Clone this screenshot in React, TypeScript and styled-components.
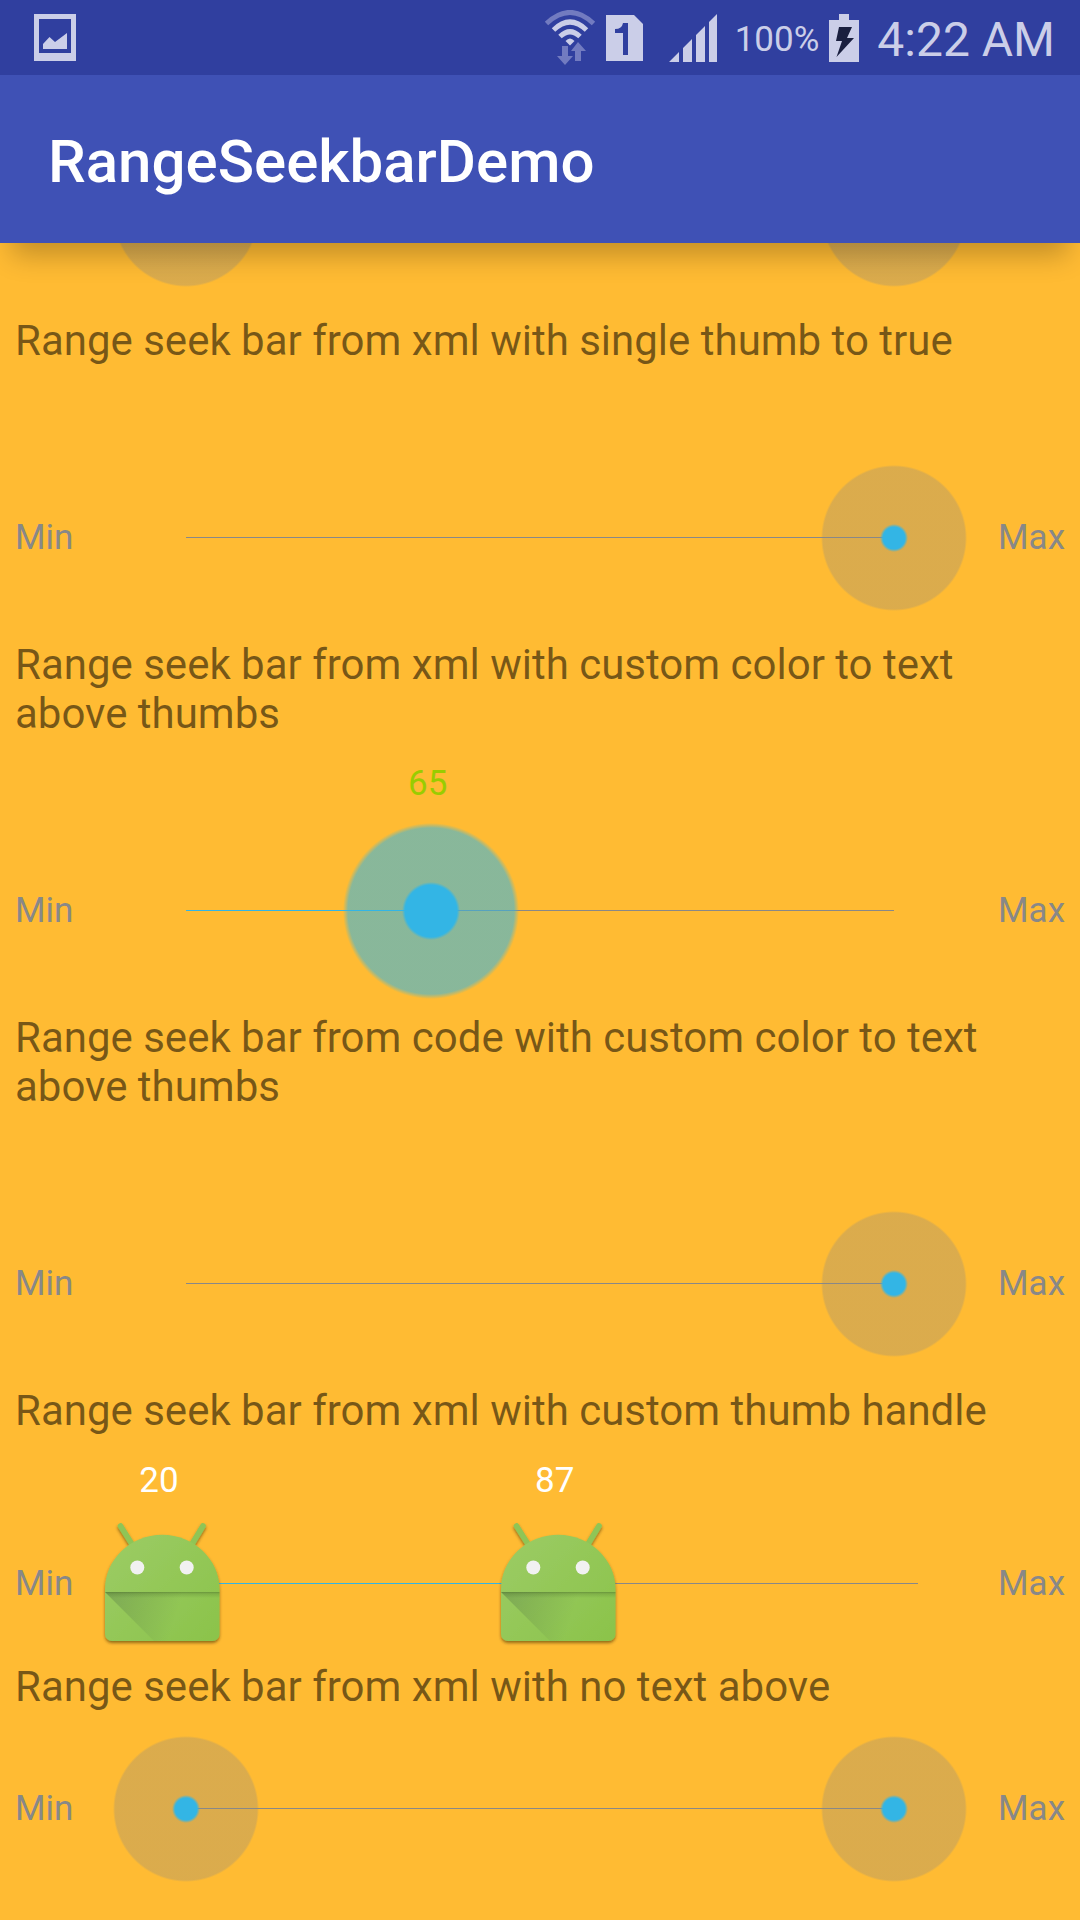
import React, { useId, useState } from "react";
import styled, { createGlobalStyle } from "styled-components";

const GlobalStyle = createGlobalStyle`
  *, *::before, *::after { box-sizing: border-box; }
  html { background: #ffbb33; }
  body {
    margin: 0;
    font-family: Roboto, "Noto Sans", sans-serif;
    background: #ffbb33;
  }
`;

const Screen = styled.div`
  display: flex;
  flex-direction: column;
  min-height: 100vh;
  overflow: hidden;
`;

const Top = styled.header`
  position: sticky;
  top: 0;
  z-index: 10;
  box-shadow: 0 24px 26px -12px rgba(0, 0, 0, 0.24);
`;

const StatusBar = styled.div`
  display: flex;
  align-items: center;
  justify-content: space-between;
  height: 75px;
  padding: 0 25px 0 34px;
  background: #303f9f;
  color: #cbcee8;
`;

const StatusGroup = styled.div`
  display: flex;
  align-items: center;
`;

const StatusIcon = styled.svg<{ $gap?: number }>`
  display: block;
  flex: none;
  margin-right: ${(p) => p.$gap ?? 0}px;
`;

const BatteryText = styled.span`
  margin-right: 10px;
  padding-top: 4px;
  font-size: 35px;
  line-height: 42px;
  font-weight: 400;
`;

const Clock = styled.time`
  font-size: 48px;
  line-height: 56px;
  padding-top: 4px;
  font-weight: 400;
`;

const AppBar = styled.div`
  display: flex;
  align-items: center;
  height: 168px;
  padding: 5px 48px 0;
  background: #3f51b5;
`;

const AppTitle = styled.h1`
  margin: 0;
  color: #fff;
  font-size: 60px;
  line-height: 70px;
  font-weight: 500;
`;

/* The list is scrolled so that its first bar lies partly under the app bar. */
const List = styled.main`
  margin-top: -125px;
  padding-bottom: 14px;
`;

const Caption = styled.h2`
  margin: 0;
  padding: 5px 15px 2px;
  color: rgba(0, 0, 0, 0.54);
  font-size: 42px;
  line-height: 49px;
  font-weight: 400;
`;

const Bar = styled.div<{ $labelled: boolean }>`
  display: grid;
  grid-template-columns: 90px 1fr 90px;
  padding: ${(p) => (p.$labelled ? 75 : 0)}px 0 1px;
`;

const Bound = styled.span<{ $end?: boolean }>`
  align-self: center;
  padding: 0 15px;
  color: #888;
  font-size: 35px;
  line-height: 42px;
  white-space: nowrap;
  justify-self: ${(p) => (p.$end ? "end" : "start")};
`;

const Track = styled.div<{ $size: number }>`
  position: relative;
  height: ${(p) => p.$size}px;
  padding: 0 ${(p) => p.$size / 2}px;
`;

const Rail = styled.div`
  position: relative;
  height: 100%;
`;

const Line = styled.div<{ $active?: boolean }>`
  position: absolute;
  top: calc(50% - 1px);
  height: 1px;
  background: ${(p) => (p.$active ? "#33b5e5" : "#888")};
`;

const Thumb = styled.div<{ $size: number }>`
  position: absolute;
  top: 0;
  width: ${(p) => p.$size}px;
  height: ${(p) => p.$size}px;
  transform: translateX(-50%);
`;

const Halo = styled.div<{ $pressed: boolean }>`
  width: 100%;
  height: 100%;
  background: ${(p) =>
    p.$pressed
      ? "radial-gradient(circle, #33b5e5 26px, rgba(51,181,229,0.58) 29px, rgba(51,181,229,0.58) 83px, rgba(51,181,229,0) 88px)"
      : "radial-gradient(circle, #33b5e5 11px, rgba(136,136,136,0.3) 14px, rgba(136,136,136,0.3) 71px, rgba(136,136,136,0) 73px)"};
`;

const ValueLabel = styled.output`
  position: absolute;
  bottom: 100%;
  left: 50%;
  padding: 0 6px 10px 0;
  transform: translateX(-50%);
  font-size: 35px;
  line-height: 42px;
`;

const Slider = styled.input`
  position: absolute;
  inset: 0;
  width: 100%;
  height: 100%;
  margin: 0;
  opacity: 0;
  pointer-events: none;
  &::-webkit-slider-thumb {
    width: 144px;
    height: 144px;
    pointer-events: auto;
  }
`;

function AndroidHandle() {
  const id = useId();
  return (
    <svg width="144" height="144" viewBox="0 0 144 144" style={{ display: "block" }} aria-hidden="true">
      <defs>
        <linearGradient id={`${id}g`} x1="15" y1="22" x2="129" y2="129" gradientUnits="userSpaceOnUse">
          <stop offset="0" stopColor="#9ccc65" />
          <stop offset="1" stopColor="#8bc34a" />
        </linearGradient>
        <linearGradient id={`${id}s`} x1="22" y1="84" x2="86" y2="104" gradientUnits="userSpaceOnUse">
          <stop offset="0" stopColor="#3c5a3c" stopOpacity="0.26" />
          <stop offset="1" stopColor="#3c5a3c" stopOpacity="0" />
        </linearGradient>
        <linearGradient id={`${id}e`} x1="0" y1="80" x2="0" y2="86" gradientUnits="userSpaceOnUse">
          <stop offset="0" stopColor="#33511c" stopOpacity="0.42" />
          <stop offset="0.3" stopColor="#33511c" stopOpacity="0.18" />
          <stop offset="1" stopColor="#33511c" stopOpacity="0" />
        </linearGradient>
        <filter id={`${id}f`} x="-10%" y="-10%" width="120%" height="125%">
          <feDropShadow dx="0" dy="2" stdDeviation="1.6" floodColor="#3a2600" floodOpacity="0.55" />
        </filter>
      </defs>
      <g filter={`url(#${id}f)`}>
        <path d="M30.5 14 42.5 33M113 14 101.500 33" stroke="#8fc556" strokeWidth="5.600" strokeLinecap="round" />
        <path
          d="M15 77C15 48 40 22.700 72.200 22.700S129.500 48 129.500 77V122a7 7 0 0 1-7 7H22a7 7 0 0 1-7-7Z"
          fill={`url(#${id}g)`}
        />
      </g>
      <path d="M15 80H129.500V129H64Z" fill={`url(#${id}s)`} />
      <path d="M15 80H129.500V86H21Z" fill={`url(#${id}e)`} />
      <circle cx="47.300" cy="55.500" r="7" fill="#f1f1f1" />
      <circle cx="96.700" cy="55.500" r="7" fill="#f1f1f1" />
    </svg>
  );
}

type SeekBarProps = {
  name: string;
  min?: number;
  max?: number;
  initial: number[];
  handle?: "halo" | "android";
  pressed?: boolean;
  labelled?: boolean;
  labelColor?: string;
};

function RangeSeekBar({
  name,
  min = 0,
  max = 100,
  initial,
  handle = "halo",
  pressed = false,
  labelled = true,
  labelColor = "#fff",
}: SeekBarProps) {
  const [values, setValues] = useState(initial);
  const id = useId();
  const size = handle === "android" ? 144 : 192;
  const share = (v: number) => ((v - min) / (max - min)) * 100;
  const single = values.length === 1;
  const low = single ? min : values[0];
  const high = values[values.length - 1];
  const changed = low !== min || high !== max;

  const move = (index: number, next: number) =>
    setValues((old) =>
      old.map((v, i) => {
        if (i !== index) return v;
        if (single) return next;
        return i === 0 ? Math.min(next, old[1]) : Math.max(next, old[0]);
      })
    );

  return (
    <Bar $labelled={labelled}>
      <Bound>Min</Bound>
      <Track $size={size}>
        <Rail>
          <Line style={{ left: 0, right: 0 }} />
          {changed && <Line $active style={{ left: `${share(low)}%`, right: `${100 - share(high)}%` }} />}
          {values.map((v, i) => (
            <Thumb key={i} $size={size} style={{ left: `${share(v)}%` }}>
              {handle === "android" ? <AndroidHandle /> : <Halo $pressed={pressed} />}
              {labelled && changed && (
                <ValueLabel htmlFor={`${id}${i}`} style={{ color: labelColor }}>
                  {v}
                </ValueLabel>
              )}
            </Thumb>
          ))}
        </Rail>
        {values.map((v, i) => (
          <Slider
            key={i}
            id={`${id}${i}`}
            type="range"
            aria-label={single ? name : `${name}, ${i === 0 ? "minimum" : "maximum"}`}
            min={min}
            max={max}
            value={v}
            onChange={(e) => move(i, Number(e.target.value))}
          />
        ))}
      </Track>
      <Bound $end>Max</Bound>
    </Bar>
  );
}

function StatusIcons() {
  return (
    <>
      <StatusIcon width="52" height="56" viewBox="0 0 52 56" $gap={10} fill="none" aria-hidden="true">
        <g stroke="currentColor" strokeWidth="5">
          <path d="M2.500 13.500Q26 -8.500 49.500 13.500" stroke="#727bc0" />
          <path d="M9.500 20Q26 4 42.500 20" />
          <path d="M16 26.500Q26 17 36 26.500" />
        </g>
        <path d="M21.500 31Q26 26 30.500 31L26 35.500Z" fill="currentColor" />
        <path d="M18 36h6v10h5l-8 9-8-9h5ZM31 51h6V41h5l-8-9-7 9h4Z" fill="#727bc0" />
      </StatusIcon>
      <StatusIcon width="37" height="46" viewBox="0 0 37 46" $gap={26} aria-hidden="true">
        <path fill="currentColor" d="M0 0H28L37 9V46H0Z" />
        <path fill="#303f9f" d="M17 8h5v32h-5V18H9v-4q7 0 8-6Z" />
      </StatusIcon>
      <StatusIcon width="48" height="48" viewBox="0 0 48 48" $gap={18} fill="currentColor" aria-hidden="true">
        <path d="M0 48 10 38V48ZM14 34 23 25V48H14ZM27 21 36 12V48H27ZM40 8 48 0V48H40Z" />
      </StatusIcon>
    </>
  );
}

export default function App() {
  return (
    <Screen>
      <GlobalStyle />
      <Top>
        <StatusBar>
          <StatusIcon width="42" height="47" viewBox="0 0 42 47" fill="currentColor" aria-hidden="true">
            <path fillRule="evenodd" d="M0 0H42V47H0ZM5 5V39H37V5Z" />
            <path d="M9 35V30L15.500 23 21 28 33 19V35Z" />
          </StatusIcon>
          <StatusGroup>
            <StatusIcons />
            <BatteryText>100%</BatteryText>
            <StatusIcon width="30" height="48" viewBox="0 0 30 48" $gap={18} aria-hidden="true">
              <path fill="currentColor" d="M10 0H20V6H30V48H0V6H10Z" />
              <path fill="#1a1f3f" d="M10 13H23L18 24H25L7.500 43 13 27H7Z" />
            </StatusIcon>
            <Clock>4:22 AM</Clock>
          </StatusGroup>
        </StatusBar>
        <AppBar>
          <AppTitle>RangeSeekbarDemo</AppTitle>
        </AppBar>
      </Top>
      <List>
        <RangeSeekBar name="Range" initial={[0, 100]} labelled={false} />
        <Caption>Range seek bar from xml with single thumb to true</Caption>
        <RangeSeekBar name="Single thumb" initial={[100]} />
        <Caption>Range seek bar from xml with custom color to text above thumbs</Caption>
        <RangeSeekBar name="Custom text color" max={188} initial={[65]} pressed labelColor="#99cc00" />
        <Caption>Range seek bar from code with custom color to text above thumbs</Caption>
        <RangeSeekBar name="Custom text color from code" initial={[100]} labelColor="#99cc00" />
        <Caption>Range seek bar from xml with custom thumb handle</Caption>
        <RangeSeekBar name="Custom thumb handle" min={20} max={148} initial={[20, 87]} handle="android" />
        <Caption>Range seek bar from xml with no text above</Caption>
        <RangeSeekBar name="No text above" initial={[0, 100]} labelled={false} />
      </List>
    </Screen>
  );
}
